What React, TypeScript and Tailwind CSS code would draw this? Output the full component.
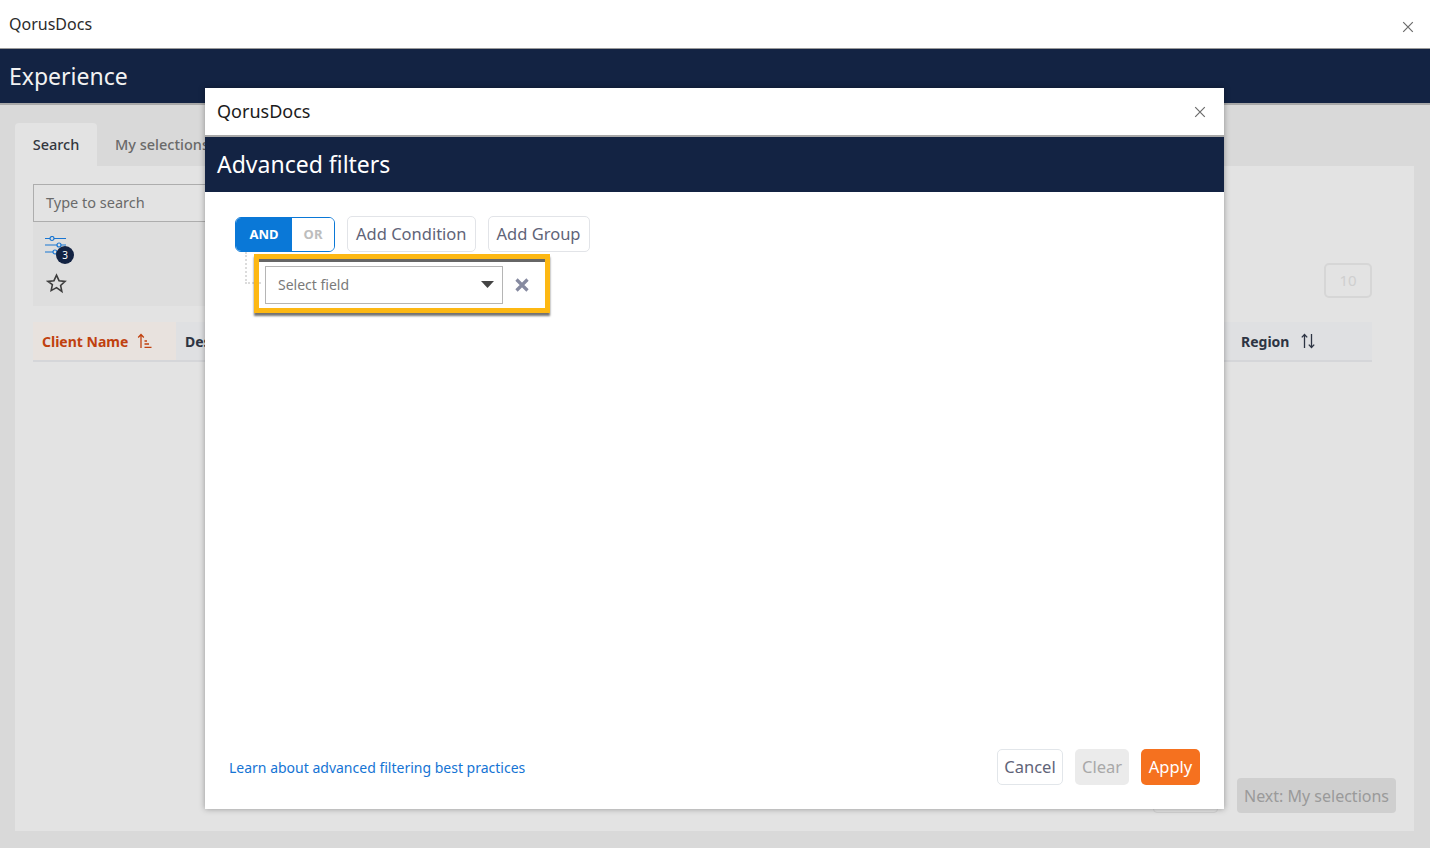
import React from "react";

const font = { fontFamily: '"Noto Sans", "Open Sans", sans-serif' };

function X({ size = 12, color = "#6b6b6b" }: { size?: number; color?: string }) {
  return (
    <svg width={size} height={size} viewBox="0 0 12 12" fill="none" stroke={color} strokeWidth="1.2">
      <path d="M1.2 1.2 10.8 10.8M10.8 1.2 1.2 10.8" />
    </svg>
  );
}

function SortAsc() {
  return (
    <svg width="15" height="16" viewBox="0 0 15 16" fill="none" stroke="#c0410f" strokeWidth="1.3">
      <path d="M4 15V1.5M1.2 4.5 4 1.5 6.8 4.5" />
      <path d="M7.5 8H10M7.5 11H12M7.5 14.3H14.5" />
    </svg>
  );
}

function SortBoth() {
  return (
    <svg width="16" height="16" viewBox="0 0 16 16" fill="none" stroke="#2d3443" strokeWidth="1.3">
      <path d="M4.5 15V1.5M1.8 4.4 4.5 1.5 7.2 4.4" />
      <path d="M11.5 1V14.5M8.8 11.6 11.5 14.5 14.2 11.6" />
    </svg>
  );
}

function Sliders() {
  return (
    <svg width="22" height="20" viewBox="0 0 22 20" fill="none" stroke="#1976d2" strokeWidth="1.2">
      <path d="M0 2.5H5M9 2.5H21M0 9H12M16 9H21M0 16H8M12 16H21" />
      <circle cx="7" cy="2.5" r="2" />
      <circle cx="14" cy="9" r="2" />
      <circle cx="10" cy="16" r="2" />
    </svg>
  );
}

export default function App() {
  return (
    <div className="relative w-[1430px] h-[848px] overflow-hidden bg-[#d9d9d9] text-[#333]" style={font}>
      {/* outer title */}
      <div className="h-[49px] bg-white border-b border-[#9a9a9a] flex items-center justify-between pl-[9px] pr-[16px]">
        <span className="text-[16px] text-[#2b2b2b] -mt-[1px]">QorusDocs</span>
        <span className="mt-[5px]"><X /></span>
      </div>
      <div className="h-[56px] bg-[#132343] border-b-2 border-[#a8a8a8] flex items-center pl-[9px]">
        <span className="text-[23px] text-[#f2f2f2]">Experience</span>
      </div>

      {/* background page */}
      <div className="pl-[15px] pr-[16px] pt-[18px]">
        <div className="flex h-[43px]">
          <div className="w-[82px] bg-[#e3e3e3] rounded-t-[4px] flex items-center justify-center text-[14.5px] font-medium text-[#33373e]">Search</div>
          <div className="pl-[18px] flex items-center text-[14.5px] font-medium text-[#6a6a6a]">My selections</div>
        </div>
        <div className="h-[665px] bg-[#e3e3e3] pt-[18px] pl-[18px] pr-[42px] relative">
          <div className="h-[38px] w-[500px] border border-[#adadad] flex items-center pl-[12px] text-[14.5px] text-[#6a6a6a]">Type to search</div>
          <div className="flex justify-between">
            <div className="w-[500px] h-[84px] bg-[#dedede] pl-[12px] pt-[14px] flex flex-col gap-[17px]">
              <div className="relative w-[22px] h-[20px]">
                <Sliders />
                <span className="absolute left-[11px] top-[10px] w-[18px] h-[18px] rounded-full bg-[#132343] text-white text-[10px] flex items-center justify-center">3</span>
              </div>
              <svg width="21" height="21" viewBox="0 0 24 24" fill="none" stroke="#3d3d3d" strokeWidth="1.8" className="ml-[1px]">
                <path d="M12 2.5l2.9 6.3 6.9.8-5.1 4.7 1.4 6.8L12 16.7l-6.1 3.4 1.4-6.8L2.2 9.6l6.9-.8z" />
              </svg>
            </div>
            <div className="mt-[41px] w-[48px] h-[35px] border-2 border-[#d6d6d6] rounded-[5px] flex items-center justify-center text-[15px] text-[#cfcfcf]">10</div>
          </div>
          <div className="mt-[16px] h-[40px] flex bg-[#dfe0e2] border-b-2 border-[#d5d6d9] text-[14px] font-bold">
            <div className="w-[143px] bg-[#e8e2de] pl-[9px] flex items-center gap-[9px] text-[#c0410f]">Client Name <SortAsc /></div>
            <div className="pl-[9px] flex items-center text-[#2d3443]">Description</div>
            <div className="ml-auto w-[131px] pl-[0px] flex items-center gap-[11px] text-[#2d3443]">Region <SortBoth /></div>
          </div>
          <div className="absolute right-[18px] bottom-[18px] flex items-end gap-[19px]">
            <div className="w-[65px] h-[35px] border border-[#d2d2d2] rounded-[4px]" />
            <div className="h-[35px] w-[159px] bg-[#cfcfcf] rounded-[4px] flex items-center justify-center text-[16px] text-[#9a9a9a]">Next: My selections</div>
          </div>
        </div>
      </div>

      {/* modal */}
      <div className="absolute left-[205px] top-[88px] w-[1019px] h-[721px] bg-white shadow-[0_0_6px_rgba(0,0,0,0.35)] flex flex-col">
        <div className="h-[49px] border-b-2 border-[#a8a8a8] flex items-center justify-between pl-[12px] pr-[18px]">
          <span className="text-[18px] text-[#1c1c1c]">QorusDocs</span>
          <X />
        </div>
        <div className="h-[55px] bg-[#132343] flex items-center pl-[12px]">
          <span className="text-[23px] text-white">Advanced filters</span>
        </div>
        <div className="flex-1 relative pl-[30px] pt-[25px]">
          <div className="flex items-start gap-[12px]">
            <div className="flex h-[35px] w-[100px] border border-[#0a78d7] rounded-[6px] overflow-hidden text-[13px] font-bold">
              <div className="w-[56px] bg-[#0a78d7] text-white flex items-center justify-center">AND</div>
              <div className="flex-1 bg-white text-[#bdbdbd] flex items-center justify-center">OR</div>
            </div>
            <div className="h-[36px] -mt-[1px] px-[8px] border border-[#e2e4e8] rounded-[5px] flex items-center text-[16.5px] text-[#5f6478]">Add Condition</div>
            <div className="h-[36px] -mt-[1px] px-[8px] border border-[#e2e4e8] rounded-[5px] flex items-center text-[16.5px] text-[#5f6478]">Add Group</div>
          </div>
          <div className="relative ml-[10px] w-[20px] h-[0px]">
            <div className="absolute left-0 top-0 w-[16px] h-[32px] border-l-2 border-b-2 border-dotted border-[#dcdcdc]" />
          </div>
          <div className="relative ml-[19px] mt-[2px] w-[296px] h-[59px] border-[5px] border-[#fdb813] shadow-[0_3px_2px_rgba(0,0,0,0.55)] flex items-center">
            <div className="absolute inset-x-0 top-0 h-[3px] bg-[#666666]" />
            <div className="ml-[6px] mt-[2px] w-[238px] h-[38px] border border-[#b5b5b5] flex items-center justify-between pl-[12px] pr-[8px] text-[14px] text-[#7a7a7a]">
              Select field
              <svg width="13" height="7" viewBox="0 0 13 7"><path d="M0 0H13L6.5 7Z" fill="#444" /></svg>
            </div>
            <svg width="14" height="14" viewBox="0 0 14 14" className="ml-[12px] mt-[3px]" stroke="#868aa0" strokeWidth="3.2" fill="none">
              <path d="M1.5 1.5 12.5 12.5M12.5 1.5 1.5 12.5" />
            </svg>
          </div>
          <div className="absolute left-[24px] right-[24px] bottom-[24px] flex items-center">
            <span className="text-[14px] text-[#1574d4]">Learn about advanced filtering best practices</span>
            <div className="ml-auto h-[36px] w-[66px] border border-[#e2e6ea] rounded-[5px] flex items-center justify-center text-[16.5px] text-[#5f6478]">Cancel</div>
            <div className="ml-[12px] h-[36px] w-[54px] bg-[#ebebeb] rounded-[5px] flex items-center justify-center text-[16.5px] text-[#a8a8a8]">Clear</div>
            <div className="ml-[12px] h-[36px] w-[59px] bg-[#f5711f] rounded-[5px] flex items-center justify-center text-[16.5px] text-white">Apply</div>
          </div>
        </div>
      </div>
    </div>
  );
}
